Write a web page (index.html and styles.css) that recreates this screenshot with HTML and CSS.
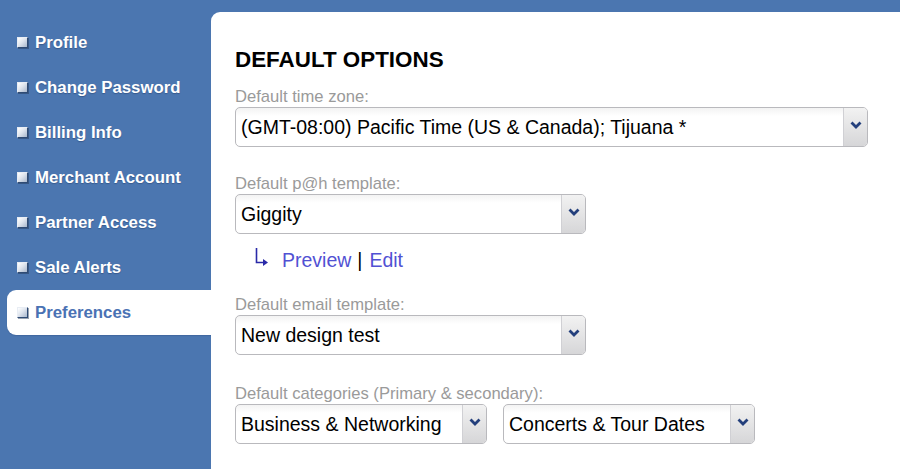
FILE: index.html
```html
<!DOCTYPE html>
<html>
<head>
<meta charset="utf-8">
<link rel="stylesheet" href="styles.css">
</head>
<body>
<div class="page">
  <nav class="sidebar">
    <a class="nav-item"><span class="bullet"></span>Profile</a>
    <a class="nav-item"><span class="bullet"></span>Change Password</a>
    <a class="nav-item"><span class="bullet"></span>Billing Info</a>
    <a class="nav-item"><span class="bullet"></span>Merchant Account</a>
    <a class="nav-item"><span class="bullet"></span>Partner Access</a>
    <a class="nav-item"><span class="bullet"></span>Sale Alerts</a>
    <a class="nav-item active"><span class="bullet"></span>Preferences</a>
  </nav>
  <main class="panel">
    <h1 class="title">DEFAULT OPTIONS</h1>

    <div class="label">Default time zone:</div>
    <div class="select w-tz">
      <span class="value">(GMT-08:00) Pacific Time (US &amp; Canada); Tijuana *</span>
      <span class="btn"><svg width="12" height="8" viewBox="0 0 12 8"><polyline points="1.5,1.5 6,6 10.5,1.5" fill="none" stroke="#233f7c" stroke-width="2.8"/></svg></span>
    </div>

    <div class="label gap-a">Default p@h template:</div>
    <div class="select w-tpl">
      <span class="value">Giggity</span>
      <span class="btn"><svg width="12" height="8" viewBox="0 0 12 8"><polyline points="1.5,1.5 6,6 10.5,1.5" fill="none" stroke="#233f7c" stroke-width="2.8"/></svg></span>
    </div>

    <div class="links">
      <svg class="corner" width="14" height="19" viewBox="0 0 14 19"><path d="M1.5 0 V14.5 H8" fill="none" stroke="#2a2aa8" stroke-width="1.6"/><polygon points="8,11 13,14.5 8,18" fill="#2a2aa8"/></svg>
      <a class="link">Preview</a><span class="sep">|</span><a class="link">Edit</a>
    </div>

    <div class="label gap-b">Default email template:</div>
    <div class="select w-tpl">
      <span class="value">New design test</span>
      <span class="btn"><svg width="12" height="8" viewBox="0 0 12 8"><polyline points="1.5,1.5 6,6 10.5,1.5" fill="none" stroke="#233f7c" stroke-width="2.8"/></svg></span>
    </div>

    <div class="label gap-c">Default categories (Primary &amp; secondary):</div>
    <div class="row">
      <div class="select w-cat">
        <span class="value">Business &amp; Networking</span>
        <span class="btn"><svg width="12" height="8" viewBox="0 0 12 8"><polyline points="1.5,1.5 6,6 10.5,1.5" fill="none" stroke="#233f7c" stroke-width="2.8"/></svg></span>
      </div>
      <div class="select w-cat">
        <span class="value">Concerts &amp; Tour Dates</span>
        <span class="btn"><svg width="12" height="8" viewBox="0 0 12 8"><polyline points="1.5,1.5 6,6 10.5,1.5" fill="none" stroke="#233f7c" stroke-width="2.8"/></svg></span>
      </div>
    </div>
  </main>
</div>
</body>
</html>
```
FILE: styles.css
```css
html, body {
  margin: 0;
  padding: 0;
  height: 100%;
}
body {
  background: #4b76b0;
  font-family: "Liberation Sans", Arial, sans-serif;
  overflow: hidden;
}
.page {
  display: flex;
  height: 469px;
}
.sidebar {
  width: 211px;
  flex: none;
  padding-top: 20px;
  display: flex;
  flex-direction: column;
}
.nav-item {
  display: flex;
  align-items: center;
  height: 45px;
  margin-left: 7px;
  padding-left: 10px;
  color: #fff;
  font-weight: bold;
  font-size: 16.8px;
  text-shadow: 0 1px 1px rgba(20, 40, 80, 0.35);
  border-radius: 9px 0 0 9px;
}
.nav-item.active {
  background: #fff;
  color: #4a72b4;
  text-shadow: none;
  box-shadow: 0 1px 1px rgba(30, 60, 110, 0.25);
}
.bullet {
  width: 9px;
  height: 9px;
  margin-right: 7px;
  border: 1px solid;
  border-color: #e8edf4 #2f4b74 #2f4b74 #e8edf4;
  box-shadow: 1px 1px 0 rgba(30, 50, 80, 0.45);
  background: linear-gradient(135deg, #ffffff 0%, #dfe5ee 45%, #a9b7cc 100%);
  flex: none;
}
.panel {
  flex: 1;
  margin-top: 12px;
  background: #fff;
  border-top-left-radius: 9px;
  padding-left: 24px;
}
.title {
  margin: 35px 0 0;
  font-size: 22.4px;
  line-height: 26px;
  font-weight: bold;
  color: #000;
}
.label {
  margin-top: 14px;
  font-size: 16.6px;
  line-height: 20px;
  color: #9a9a9a;
}
.gap-a { margin-top: 27px; }
.gap-b { margin-top: 23px; }
.gap-c { margin-top: 29px; }
.select {
  box-sizing: border-box;
  height: 40px;
  display: flex;
  align-items: stretch;
  border: 1px solid #b9b9bd;
  border-radius: 5px;
  background: linear-gradient(#f3f3f3 0px, #ffffff 8px, #ffffff 100%);
  overflow: hidden;
}
.value {
  flex: 1;
  display: flex;
  align-items: center;
  padding-left: 5px;
  font-size: 19.5px;
  color: #000;
  white-space: nowrap;
}
.btn {
  width: 24px;
  flex: none;
  display: flex;
  align-items: center;
  justify-content: center;
  padding-bottom: 4px;
  box-sizing: border-box;
  border-left: 1px solid #d0d0d4;
  background: linear-gradient(#f2f2f2, #d6d6d8);
}
.w-tz { width: 633px; }
.w-tpl { width: 351px; }
.w-cat { width: 252px; }
.row {
  display: flex;
  gap: 16px;
}
.links {
  margin-top: 14px;
  height: 24px;
  display: flex;
  align-items: center;
  padding-left: 20px;
  font-size: 19.5px;
}
.corner {
  margin-right: 13px;
  margin-top: -6px;
}
.link {
  color: #5151d3;
}
.sep {
  color: #000;
  margin: 0 7px 0 6px;
}
```
